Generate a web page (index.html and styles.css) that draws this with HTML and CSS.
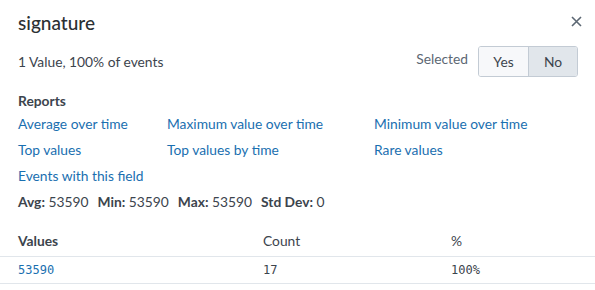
FILE: index.html
```html
<!DOCTYPE html>
<html lang="en">
<head>
<meta charset="UTF-8">
<title>signature</title>
<link rel="stylesheet" href="styles.css">
</head>
<body>
<div class="popover">
    <header class="head">
        <h2 class="title">signature</h2>
        <svg class="close" width="11" height="11" viewBox="0 0 11 11">
            <path d="M1 1L10 10M10 1L1 10" stroke="#5c6773" stroke-width="1.6" fill="none"/>
        </svg>
    </header>
    <div class="summary">
        <span class="count">1 Value, 100% of events</span>
        <div class="selected">
            <span class="sel-label">Selected</span>
            <div class="toggle">
                <button class="btn">Yes</button>
                <button class="btn active">No</button>
            </div>
        </div>
    </div>
    <div class="reports">
        <h3>Reports</h3>
        <div class="links">
            <a href="#">Average over time</a>
            <a href="#">Maximum value over time</a>
            <a href="#">Minimum value over time</a>
            <a href="#">Top values</a>
            <a href="#">Top values by time</a>
            <a href="#">Rare values</a>
            <a href="#">Events with this field</a>
        </div>
        <div class="stats">
            <span><b>Avg:</b> 53590</span>
            <span><b>Min:</b> 53590</span>
            <span><b>Max:</b> 53590</span>
            <span><b>Std Dev:</b> 0</span>
        </div>
    </div>
    <table class="values">
        <thead>
            <tr><th class="c-val">Values</th><th class="c-count">Count</th><th class="c-pct">%</th></tr>
        </thead>
        <tbody>
            <tr><td class="c-val mono link">53590</td><td class="mono">17</td><td class="mono">100%</td></tr>
        </tbody>
    </table>
</div>
</body>
</html>
```

FILE: styles.css
```css
body, html {
    margin: 0;
    padding: 0;
    background: #fff;
}
body {
    font-family: Lato, "Open Sans", sans-serif;
    color: #3c444d;
    font-size: 13.8px;
}
.popover {
    width: 595px;
}
.head {
    display: flex;
    justify-content: space-between;
    align-items: center;
    padding: 8px 13px 0 18px;
    height: 28px;
}
.title {
    margin: 0;
    font-size: 19px;
    font-weight: 500;
    color: #2b3033;
}
.close {
    margin-top: -2px;
}
.summary {
    display: flex;
    justify-content: space-between;
    align-items: center;
    padding: 10px 17px 0 18px;
}
.selected {
    display: flex;
    align-items: center;
    gap: 10px;
}
.sel-label {
    color: #5c6773;
    margin-top: -6px;
}
.toggle {
    display: flex;
    border: 1px solid #c3cbd4;
    border-radius: 3px;
    overflow: hidden;
}
.btn {
    font: inherit;
    color: #3c444d;
    width: 49px;
    height: 29px;
    border: none;
    background: #f7f8fa;
    padding: 0;
}
.btn.active {
    background: #e1e6eb;
    border-left: 1px solid #c3cbd4;
}
.reports {
    padding: 15px 18px 0;
}
.reports h3 {
    margin: 0;
    font-size: 13.8px;
    font-weight: 700;
}
.links {
    display: grid;
    grid-template-columns: 149px 207px auto;
    row-gap: 8px;
    margin-top: 6px;
}
.links a {
    color: #1a6fb0;
    text-decoration: none;
    line-height: 18px;
}
.stats {
    margin-top: 8px;
    display: flex;
    gap: 9px;
}
.stats b {
    font-weight: 700;
}
.values {
    margin-top: 21px;
    width: 100%;
    border-collapse: collapse;
}
.values th {
    text-align: left;
    font-weight: 400;
    padding: 0 0 6px;
    height: 19px;
    border-bottom: 1px solid #e1e6eb;
}
.values th.c-val {
    font-weight: 700;
}
.values td {
    padding: 0;
    height: 26px;
    border-bottom: 1px solid #e1e6eb;
}
.c-val {
    padding-left: 18px !important;
    width: 245px;
}
.c-count {
    width: 188px;
}
.mono {
    font-family: "DejaVu Sans Mono", monospace;
    font-size: 12px;
}
.link {
    color: #1a6fb0;
}
```
